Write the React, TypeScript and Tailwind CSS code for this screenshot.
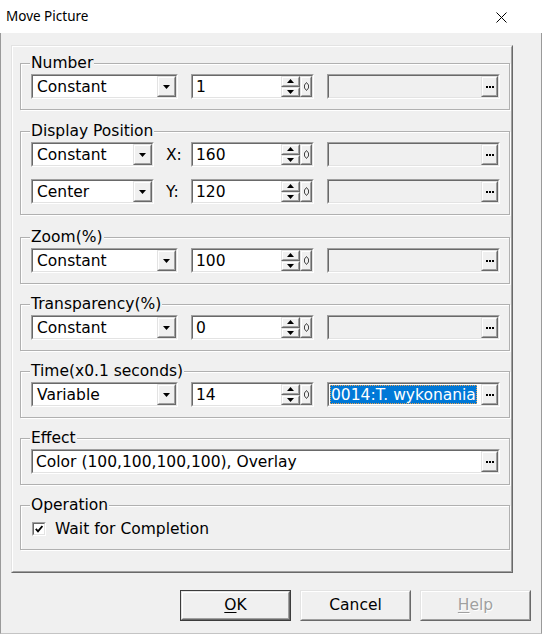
import type { ReactNode } from "react";
import clsx from "clsx";

type Box = { className?: string; children?: ReactNode };

// Classic 3D raised face (buttons, spinner halves, combo arrows)
function Raised({ className, children }: Box) {
  return (
    <div
      className={clsx(
        "flex flex-col border border-t-[#e3e3e3] border-l-[#e3e3e3] border-r-[#696969] border-b-[#696969]",
        className
      )}
    >
      <div className="flex flex-1 items-center justify-center border border-t-white border-l-white border-r-[#a0a0a0] border-b-[#a0a0a0] bg-[#f0f0f0]">
        {children}
      </div>
    </div>
  );
}

// Classic 3D sunken well (edits, combos)
function Sunken({ className, children }: Box) {
  return (
    <div
      className={clsx(
        "flex h-[25px] border border-t-[#a0a0a0] border-l-[#a0a0a0] border-r-white border-b-white",
        className
      )}
    >
      <div className="flex min-w-0 flex-1 border border-t-[#696969] border-l-[#696969] border-r-[#e3e3e3] border-b-[#e3e3e3]">
        {children}
      </div>
    </div>
  );
}

function Tri({ up }: { up?: boolean }) {
  return (
    <svg width="7" height="4" viewBox="0 0 7 4">
      <polygon points={up ? "0,4 7,4 3.5,0" : "0,0 7,0 3.5,4"} fill="#000" />
    </svg>
  );
}

function Dots() {
  return (
    <svg width="8" height="2" viewBox="0 0 8 2" className="mt-[1px]">
      <rect x="0" y="0" width="2" height="2" fill="#000" />
      <rect x="3" y="0" width="2" height="2" fill="#000" />
      <rect x="6" y="0" width="2" height="2" fill="#000" />
    </svg>
  );
}

function Combo({ value, className }: { value: string; className: string }) {
  return (
    <Sunken className={className}>
      <div className="flex-1 bg-white pl-[4px] pt-[2px] leading-[19px]">{value}</div>
      <Raised className="w-[19px]">
        <Tri />
      </Raised>
    </Sunken>
  );
}

function SpinEdit({ value }: { value: string }) {
  return (
    <Sunken className="w-[123px]">
      <div className="flex-1 bg-white pl-[3px] pt-[2px] leading-[19px]">{value}</div>
      <div className="flex w-[19px] flex-col">
        <Raised className="flex-1">
          <Tri up />
        </Raised>
        <Raised className="flex-1">
          <Tri />
        </Raised>
      </div>
      <Raised className="w-[12px]">
        <svg width="5" height="9" viewBox="0 0 5 9">
          <path d="M2.5 0.5 L4.5 3 L4.5 6 L2.5 8.5 L0.5 6 L0.5 3 Z" fill="none" stroke="#444" strokeWidth="1" />
        </svg>
      </Raised>
    </Sunken>
  );
}

function Browse({ children, white }: { children?: ReactNode; white?: boolean }) {
  return (
    <Sunken className="flex-1">
      <div className={clsx("flex min-w-0 flex-1 overflow-hidden whitespace-nowrap", white ? "bg-white" : "bg-[#f0f0f0]")}>
        {children}
      </div>
      <Raised className="w-[17px]">
        <Dots />
      </Raised>
    </Sunken>
  );
}

function Group({ label, className, children }: Box & { label: string }) {
  return (
    <fieldset
      className={clsx(
        "border border-[#b0b0b0] pl-[10px] pr-[9px] pt-[3px] shadow-[1px_1px_0_#fff,inset_1px_1px_0_#fff]",
        className
      )}
    >
      <legend className="-ml-px bg-[#f0f0f0] px-px leading-[16px]">{label}</legend>
      {children}
    </fieldset>
  );
}

function ValueRow({ mode, value }: { mode: string; value: string }) {
  return (
    <div className="flex gap-[13px]">
      <Combo value={mode} className="w-[147px]" />
      <SpinEdit value={value} />
      <Browse />
    </div>
  );
}

function AxisRow({ mode, axis, value }: { mode: string; axis: string; value: string }) {
  return (
    <div className="flex">
      <Combo value={mode} className="w-[123px]" />
      <div className="w-[37px] pl-[12px] pt-[1px] leading-[24px]">{axis}</div>
      <SpinEdit value={value} />
      <div className="ml-[13px] flex flex-1">
        <Browse />
      </div>
    </div>
  );
}

function DialogButton({ children, isDefault }: Box & { isDefault?: boolean }) {
  const face = <Raised className="h-full w-full">{children}</Raised>;
  return (
    <div className={clsx("h-[31px] w-[111px]", isDefault && "border border-[#3c3c3c]")}>{face}</div>
  );
}

export default function App() {
  return (
    <div className="flex h-[634px] w-[542px] flex-col bg-white font-['DejaVu_Sans',sans-serif] text-[15.5px] text-black">
      {/* caption */}
      <div className="flex h-[33px] shrink-0 items-center justify-between pl-[6px] pr-[35px]">
        <span className="font-['Noto_Sans',sans-serif] text-[13.5px]">Move Picture</span>
        <svg width="11" height="11" viewBox="0 0 11 11" className="mt-[2px]">
          <path d="M0.5 0.5 L10.5 10.5 M10.5 0.5 L0.5 10.5" stroke="#000" strokeWidth="1" />
        </svg>
      </div>

      <div className="flex flex-1 flex-col border-x border-b border-x-[#9a9a9a] border-b-[#c4c4c4] bg-[#f0f0f0] pl-[10px] pt-[12px]">
        <div className="flex w-[502px] flex-col border border-t-[#e3e3e3] border-l-[#e3e3e3] border-r-[#696969] border-b-[#696969]">
          <div className="flex flex-col border border-t-white border-l-white border-r-[#a0a0a0] border-b-[#a0a0a0] pb-[21px] pl-[7px] pr-px pt-[8px]">
            <Group label="Number" className="pb-[10px]">
              <ValueRow mode="Constant" value="1" />
            </Group>

            <Group label="Display Position" className="mt-[13px] pb-[10px]">
              <div className="flex flex-col gap-[12px]">
                <AxisRow mode="Constant" axis="X:" value="160" />
                <AxisRow mode="Center" axis="Y:" value="120" />
              </div>
            </Group>

            <Group label="Zoom(%)" className="mt-[14px] pb-[10px]">
              <ValueRow mode="Constant" value="100" />
            </Group>

            <Group label="Transparency(%)" className="mt-[12px] pb-[10px]">
              <ValueRow mode="Constant" value="0" />
            </Group>

            <Group label="Time(x0.1 seconds)" className="mt-[12px] pb-[10px]">
              <div className="flex gap-[13px]">
                <Combo value="Variable" className="w-[147px]" />
                <SpinEdit value="14" />
                <Browse white>
                  <div className="flex py-px pl-px">
                    <span className="bg-[#0078d7] px-px pt-px leading-[18px] text-white outline-1 -outline-offset-1 outline-dotted outline-[#e8a050]">
                      0014:T. wykonania
                    </span>
                  </div>
                </Browse>
              </div>
            </Group>

            <Group label="Effect" className="mt-[12px] pb-[10px]">
              <Browse white>
                <span className="pl-[3px] pt-[2px] leading-[19px]">Color (100,100,100,100), Overlay</span>
              </Browse>
            </Group>

            <Group label="Operation" className="mt-[12px] pb-[7px]">
              <div className="flex h-[26px] items-center gap-[9px] pl-px">
                <div className="flex h-[14px] w-[14px] border border-t-[#a0a0a0] border-l-[#a0a0a0] border-r-white border-b-white">
                  <div className="flex flex-1 items-center justify-center border border-t-[#696969] border-l-[#696969] border-r-[#e3e3e3] border-b-[#e3e3e3] bg-white">
                    <svg width="8" height="8" viewBox="0 0 8 8">
                      <path d="M0.8 3.8 L3 6.4 L7.4 1" fill="none" stroke="#000" strokeWidth="1.8" />
                    </svg>
                  </div>
                </div>
                <span className="pt-[2px]">Wait for Completion</span>
              </div>
            </Group>
          </div>
        </div>

        <div className="mt-[17px] flex justify-end gap-[9px] pr-[10px]">
          <DialogButton isDefault>
            <span>
              <span className="underline underline-offset-2">O</span>K
            </span>
          </DialogButton>
          <DialogButton>Cancel</DialogButton>
          <DialogButton>
            <span className="text-[#a0a0a0] [text-shadow:1px_1px_0_#fff]">
              <span className="underline underline-offset-2">H</span>elp
            </span>
          </DialogButton>
        </div>
      </div>
    </div>
  );
}
